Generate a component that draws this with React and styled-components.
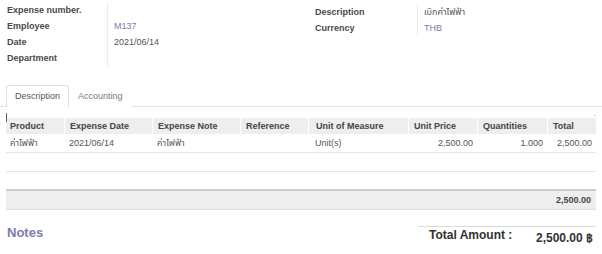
import styled, { createGlobalStyle } from 'styled-components';

const GlobalStyle = createGlobalStyle`
  html, body {
    margin: 0;
    padding: 0;
    background: #fff;
  }
  body {
    font-family: "Liberation Sans", Arial, "Noto Sans Thai", "DejaVu Sans", sans-serif;
    font-size: 9px;
    color: #555;
  }
`;

const purple = '#7c7bad';

const Page = styled.div`
  width: 602px;
  height: 254px;
  overflow: hidden;
`;

const Header = styled.div`
  display: flex;
  align-items: flex-start;
  height: 85px;
  box-sizing: border-box;
  padding: 2px 0 0 7px;
`;

const FieldGroup = styled.div`
  display: grid;
  grid-template-columns: ${(p) => p.$labelWidth}px 1fr;
  width: ${(p) => p.$width}px;
  margin-top: ${(p) => p.$offset || 0}px;
`;

const Label = styled.div`
  line-height: 16px;
  height: 16px;
  font-weight: bold;
  color: #4a4a4a;
  white-space: nowrap;
`;

const Value = styled.div`
  line-height: 16px;
  height: 16px;
  padding-left: 6px;
  border-left: 1px solid #ececec;
  color: ${(p) => (p.$link ? purple : '#555')};
  white-space: nowrap;
`;

const TabBar = styled.div`
  display: flex;
  height: 22px;
  box-sizing: border-box;
  padding-left: 6px;
  border-bottom: 1px solid #e2e2e2;
`;

const Tab = styled.div`
  height: 22px;
  box-sizing: border-box;
  padding: 0 8px;
  line-height: 21px;
  border: 1px solid ${(p) => (p.$active ? '#dedede' : 'transparent')};
  border-bottom: none;
  border-radius: 3px 3px 0 0;
  background: #fff;
  color: ${(p) => (p.$active ? '#555' : '#7a7a7a')};
`;

const TableWrap = styled.div`
  position: relative;
  margin: 11px 6px 0;

  &::before {
    content: '';
    position: absolute;
    left: 0;
    top: -5px;
    width: 1px;
    height: 9px;
    background: #666;
  }

  &::after {
    content: '';
    position: absolute;
    right: 1px;
    top: -3px;
    width: 1px;
    height: 1px;
    background: #aaa;
  }
`;

const Table = styled.table`
  width: 590px;
  border-collapse: separate;
  border-spacing: 0;
  table-layout: fixed;
`;

const Th = styled.th`
  width: ${(p) => p.$w}px;
  height: 16px;
  padding: 0 ${(p) => (p.$right ? 4 : 0)}px 0 ${(p) => p.$pad ?? 5}px;
  box-sizing: border-box;
  background: #eee;
  border-left: ${(p) => (p.$first ? 'none' : '1px solid #fff')};
  text-align: left;
  font-weight: bold;
  color: #444;
  white-space: nowrap;
  overflow: hidden;
`;

const Row = styled.tr`
  height: ${(p) => p.$h || 19}px;
`;

const Td = styled.td`
  padding: 0 4px 0 ${(p) => p.$pad ?? 5}px;
  border-bottom: ${(p) => (p.$plain ? 'none' : '1px solid #e6e6e6')};
  text-align: ${(p) => (p.$right ? 'right' : 'left')};
  color: #555;
  white-space: nowrap;
  overflow: hidden;
`;

const FootCell = styled.td`
  height: 18px;
  padding: 0 5px 0 0;
  background: #eee;
  border-top: 2px solid #cbcbcb;
  border-bottom: 1px solid #dedede;
  text-align: right;
  font-weight: bold;
  color: #444;
`;

const Bottom = styled.div`
  display: flex;
  justify-content: space-between;
  align-items: flex-start;
  margin-top: 16px;
  padding: 0 6px 0 7px;
`;

const Notes = styled.div`
  font-size: 13px;
  line-height: 15px;
  font-weight: bold;
  color: ${purple};
  margin-top: -1px;
`;

const Totals = styled.div`
  display: flex;
  justify-content: space-between;
  width: 178px;
  box-sizing: border-box;
  border-top: 1px solid #dcdcdc;
  padding: 0 3px 0 11px;
`;

const TotalLabel = styled.div`
  font-size: 12px;
  line-height: 15px;
  padding-top: 1px;
  font-weight: bold;
  color: #333;
`;

const TotalValue = styled.div`
  font-size: 12px;
  line-height: 15px;
  padding-top: 4px;
  font-weight: bold;
  color: #333;
`;

const columns = [
  { key: 'product', title: 'Product', w: 58, pad: 4 },
  { key: 'date', title: 'Expense Date', w: 88 },
  { key: 'note', title: 'Expense Note', w: 88 },
  { key: 'ref', title: 'Reference', w: 68 },
  { key: 'uom', title: 'Unit of Measure', w: 100, pad: 7 },
  { key: 'price', title: 'Unit Price', w: 69, right: true },
  { key: 'qty', title: 'Quantities', w: 70, right: true },
  { key: 'total', title: 'Total', w: 49, right: true },
];

const lines = [
  {
    product: 'ค่าไฟฟ้า',
    date: '2021/06/14',
    note: 'ค่าไฟฟ้า',
    ref: '',
    uom: 'Unit(s)',
    price: '2,500.00',
    qty: '1.000',
    total: '2,500.00',
  },
];

const FieldList = ({ fields, labelWidth, width, offset }) => (
  <FieldGroup $labelWidth={labelWidth} $width={width} $offset={offset}>
    {fields.map((f) => [
      <Label key={f.label + '-l'}>{f.label}</Label>,
      <Value key={f.label + '-v'} $link={f.link}>
        {f.value}
      </Value>,
    ])}
  </FieldGroup>
);

export default function App() {
  return (
    <Page>
      <GlobalStyle />
      <Header>
        <FieldList
          labelWidth={100}
          width={308}
          fields={[
            { label: 'Expense number.', value: '' },
            { label: 'Employee', value: 'M137', link: true },
            { label: 'Date', value: '2021/06/14' },
            { label: 'Department', value: '' },
          ]}
        />
        <FieldList
          labelWidth={102}
          width={200}
          offset={2}
          fields={[
            { label: 'Description', value: 'เบิกค่าไฟฟ้า' },
            { label: 'Currency', value: 'THB', link: true },
          ]}
        />
      </Header>

      <TabBar>
        <Tab $active>Description</Tab>
        <Tab>Accounting</Tab>
      </TabBar>

      <TableWrap>
        <Table>
          <thead>
            <tr>
              {columns.map((c, i) => (
                <Th key={c.key} $w={c.w} $pad={c.pad} $first={i === 0}>
                  {c.title}
                </Th>
              ))}
            </tr>
          </thead>
          <tbody>
            {lines.map((line, idx) => (
              <Row key={idx} $h={19}>
                {columns.map((c) => (
                  <Td key={c.key} $pad={c.pad} $right={c.right}>
                    {line[c.key]}
                  </Td>
                ))}
              </Row>
            ))}
            <Row $h={19}>
              <Td colSpan={columns.length} />
            </Row>
            <Row $h={17}>
              <Td colSpan={columns.length} $plain />
            </Row>
          </tbody>
          <tfoot>
            <tr>
              <FootCell colSpan={columns.length}>2,500.00</FootCell>
            </tr>
          </tfoot>
        </Table>
      </TableWrap>

      <Bottom>
        <Notes>Notes</Notes>
        <Totals>
          <TotalLabel>Total Amount :</TotalLabel>
          <TotalValue>2,500.00 ฿</TotalValue>
        </Totals>
      </Bottom>
    </Page>
  );
}
